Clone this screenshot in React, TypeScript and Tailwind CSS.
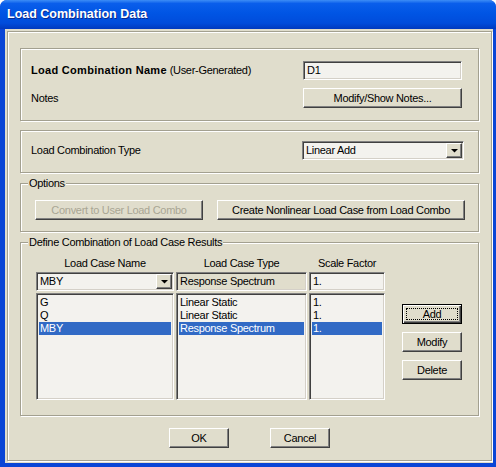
import React from 'react';

const raised =
  'border border-t-white border-l-white border-r-[#404040] border-b-[#404040] shadow-[inset_-1px_-1px_0_#808080]';
const sunken =
  'border border-t-[#808080] border-l-[#808080] border-r-white border-b-white shadow-[inset_1px_1px_0_#404040,inset_-1px_-1px_0_#D4D0C8]';
const etched = 'border border-[#A3A090] shadow-[inset_1px_1px_0_#FFFFFF,1px_1px_0_#FFFFFF]';

function Arrow() {
  return (
    <svg width="7" height="4" viewBox="0 0 7 4">
      <polygon points="0,0 7,0 3.5,3.5" fill="#000" />
    </svg>
  );
}

function Combo({ value, className }: { value: string; className: string }) {
  return (
    <div className={`${sunken} ${className} h-[19px] bg-[#F3F2EE] flex items-stretch p-[1px]`}>
      <span className="flex-1 pl-[2px] leading-[15px]">{value}</span>
      <span className={`${raised} w-[16px] bg-[#E0DDCC] flex items-center justify-center`}>
        <Arrow />
      </span>
    </div>
  );
}

function Button({ label, className, disabled }: { label: string; className: string; disabled?: boolean }) {
  return (
    <div
      className={`${raised} ${className} h-[20px] bg-[#E0DDCC] flex items-center justify-center ${
        disabled ? 'text-[#A9A694]' : 'text-black'
      }`}
    >
      {label}
    </div>
  );
}

function ListBox({ rows, selected, className }: { rows: string[]; selected: number; className: string }) {
  return (
    <div className={`${sunken} ${className} h-[107px] bg-[#F3F2EE] pt-[2px] px-[2px]`}>
      {rows.map((r, i) => (
        <div
          key={i}
          className={`h-[13px] leading-[13px] pl-[1px] ${i === selected ? 'bg-[#316AC5] text-white' : ''}`}
        >
          {r}
        </div>
      ))}
    </div>
  );
}

function Group({ label, className, children }: { label?: string; className: string; children: React.ReactNode }) {
  return (
    <div className={`${etched} relative ml-[12px] w-[459px] ${className}`}>
      {label && (
        <span className="absolute left-[7px] -top-[8px] px-[1px] bg-[#E0DDCC] leading-[14px]">{label}</span>
      )}
      {children}
    </div>
  );
}

export default function App() {
  return (
    <div className="w-[496px] h-[467px] bg-[#0A45D6] rounded-t-[7px] overflow-hidden flex flex-col font-['Liberation_Sans',Arial,sans-serif] text-[11px] tracking-[-0.3px] text-black">
      {/* Title bar */}
      <div className="h-[29px] shrink-0 bg-[linear-gradient(180deg,#3D8DF6_0%,#0A5EEB_12%,#0055E4_45%,#004CDB_80%,#0039BE_100%)] flex items-center pl-[7px] text-white font-bold text-[12.5px] tracking-normal [text-shadow:1px_1px_0_#0B2B8E]">
        Load Combination Data
      </div>

      {/* Body */}
      <div className="flex-1 ml-[5px] mr-[3px] mb-[4px] bg-[#E0DDCC] pl-[2px] pr-[1px] pt-[2px] pb-[2px] flex">
        <div className={`${etched} flex-1 flex flex-col`}>
          {/* Name / Notes */}
          <Group className="mt-[16px] h-[73px] pt-[12px] pl-[10px] pr-[16px]">
            <div className="flex items-center h-[19px]">
              <span className="flex-1">
                <span className="font-bold tracking-[0.3px]">Load Combination Name</span> (User-Generated)
              </span>
              <div className={`${sunken} w-[159px] h-[19px] bg-[#F3F2EE] pl-[3px] leading-[17px]`}>D1</div>
            </div>
            <div className="flex items-center mt-[8px]">
              <span className="flex-1">Notes</span>
              <Button label="Modify/Show Notes..." className="w-[159px]" />
            </div>
          </Group>

          {/* Type */}
          <Group className="mt-[9px] h-[43px] pt-[10px] pl-[10px] pr-[14px]">
            <div className="flex items-center h-[19px]">
              <span className="flex-1">Load Combination Type</span>
              <Combo value="Linear Add" className="w-[162px]" />
            </div>
          </Group>

          {/* Options */}
          <Group label="Options" className="mt-[10px] h-[49px] pt-[16px] pl-[14px]">
            <div className="flex gap-[14px]">
              <Button label="Convert to User Load Combo" className="w-[168px]" disabled />
              <Button label="Create Nonlinear Load Case from Load Combo" className="w-[248px]" />
            </div>
          </Group>

          {/* Define combination */}
          <Group
            label="Define Combination of Load Case Results"
            className="mt-[10px] h-[174px] pt-[13px] pl-[15px] flex"
          >
            <div className="flex flex-col w-[138px]">
              <div className="h-[14px] leading-[14px] text-center">Load Case Name</div>
              <Combo value="MBY" className="mt-[2px] w-[138px]" />
              <ListBox rows={['G', 'Q', 'MBY']} selected={2} className="mt-[2px] w-[138px]" />
            </div>
            <div className="flex flex-col w-[131px] ml-[2px]">
              <div className="h-[14px] leading-[14px] text-center">Load Case Type</div>
              <div className={`${sunken} mt-[2px] h-[19px] bg-[#E0DDCC] pl-[3px] leading-[17px]`}>
                Response Spectrum
              </div>
              <ListBox
                rows={['Linear Static', 'Linear Static', 'Response Spectrum']}
                selected={2}
                className="mt-[2px]"
              />
            </div>
            <div className="flex flex-col w-[76px] ml-[2px]">
              <div className="h-[14px] leading-[14px] text-center">Scale Factor</div>
              <div className={`${sunken} mt-[2px] h-[19px] bg-[#F3F2EE] pl-[3px] leading-[17px]`}>1.</div>
              <ListBox rows={['1.', '1.', '1.']} selected={2} className="mt-[2px]" />
            </div>
            <div className="flex flex-col ml-[17px] pt-[48px] gap-[8px]">
              <div className="w-[60px] h-[20px] border border-black bg-[#E0DDCC] shadow-[inset_1px_1px_0_#FFFFFF,inset_-1px_-1px_0_#404040,inset_-2px_-2px_0_#808080] p-[3px]">
                <div className="h-full border border-dotted border-black flex items-center justify-center leading-none">
                  Add
                </div>
              </div>
              <Button label="Modify" className="w-[60px]" />
              <Button label="Delete" className="w-[60px]" />
            </div>
          </Group>

          {/* OK / Cancel */}
          <div className="mt-[12px] flex justify-center gap-[41px]">
            <Button label="OK" className="w-[60px]" />
            <Button label="Cancel" className="w-[60px]" />
          </div>
        </div>
      </div>
    </div>
  );
}
